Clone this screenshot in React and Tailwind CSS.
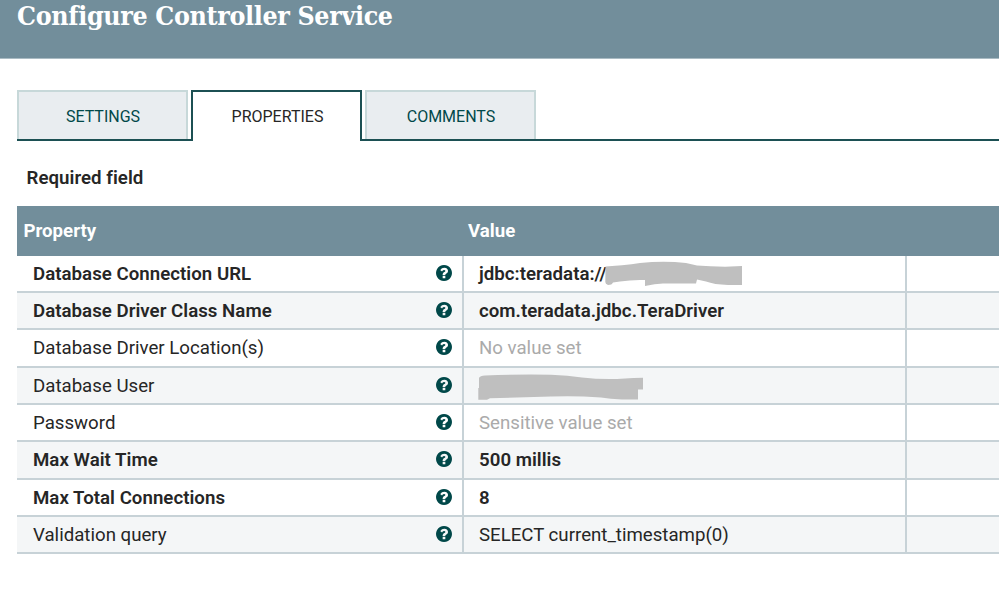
import React from "react";

const rows = [
  { name: "Database Connection URL", value: "jdbc:teradata://", required: true, mask: "url" },
  { name: "Database Driver Class Name", value: "com.teradata.jdbc.TeraDriver", required: true },
  { name: "Database Driver Location(s)", value: "No value set", unset: true },
  { name: "Database User", value: "", mask: "user" },
  { name: "Password", value: "Sensitive value set", unset: true },
  { name: "Max Wait Time", value: "500 millis", required: true },
  { name: "Max Total Connections", value: "8", required: true },
  { name: "Validation query", value: "SELECT current_timestamp(0)" },
];

function HelpIcon() {
  return (
    <svg viewBox="128 128 1536 1536" className="mt-[9px] size-4 shrink-0 fill-[#004849]">
      <path d="M1024 1376v-192q0-14-9-23t-23-9h-192q-14 0-23 9t-9 23v192q0 14 9 23t23 9h192q14 0 23-9t9-23zm256-672q0-88-55.5-163t-138.5-116-170-41q-243 0-371 213-15 24 8 42l132 100q7 6 19 6 16 0 25-12 53-68 86-92 34-24 86-24 48 0 85.5 26t37.5 59q0 38-20 61t-68 45q-63 28-115.5 86.500t-52.5 125.500v36q0 14 9 23t23 9h192q14 0 23-9t9-23q0-19 21.500-49.500t54.500-49.500q32-18 49-28.500t46-35 44.500-48 28-60.500 12.500-81zm384 192q0 209-103 385.500t-279.500 279.500-385.500 103-385.500-103-279.500-279.500-103-385.500 103-385.500 279.500-279.500 385.500-103 385.500 103 279.500 279.500 103 385.500z" />
    </svg>
  );
}

function Mask({ kind }) {
  if (kind === "url") {
    return (
      <svg viewBox="605 261 138 26" className="-ml-[1.500px] mt-[5px] h-[26px] w-[138px] shrink-0 fill-[#bfbfbf]">
        <path d="M605.500 266.500L622 265.300Q632 264.500 640 263Q664 260.500 686 263L697 265.500Q710 266.500 725 266.700L742 266V285H728Q714 284.500 706 281.500L697 279.500L696 283.500H663Q655 283.500 645 286V280Q632 279.500 620 281.500L613 282.500Q612 285 608 285Q605.300 284 605.300 282Z" />
      </svg>
    );
  }
  return (
    <svg viewBox="478 373 166 27" className="-ml-px mt-[6px] h-[27px] w-[166px] shrink-0 fill-[#bfbfbf]">
      <path d="M479 377Q480 374.500 485 374.500Q520 373 551 373.700Q568 374.500 582 376.500Q604 379 625 377.500Q633 377 643 376.700V388.500H638V398.500H622Q610 398 601 396.500Q575 394.500 551 395.500L490 397.200L487 398.700H478.300V387H479Z" />
    </svg>
  );
}

function Tab({ label, active }) {
  return (
    <div
      className={
        active
          ? "flex h-[51px] w-[171px] items-center justify-center border-x-2 border-t-2 border-[#1c5053] bg-white pl-[2px] text-[#262626]"
          : "flex h-[49px] w-[171px] items-center justify-center border-x-2 border-t-2 border-[#c7d8d9] bg-[#e9edf0] pt-[2px] pl-px text-[#004849]"
      }
    >
      <span>{label}</span>
    </div>
  );
}

export default function App() {
  return (
    <div className="h-[594px] w-[999px] overflow-hidden bg-white font-['Roboto',sans-serif] text-[18.670px] text-[#262626]">
      <header className="h-[58px] bg-[#728e9b] pl-[17px]">
        <h1 className="whitespace-nowrap font-['Roboto_Slab','DejaVu_Serif_Condensed','DejaVu_Serif',serif] text-[26.500px] leading-[32px] font-bold tracking-[-0.330px] text-white">
          <span>Configure Controller Service</span>
        </h1>
      </header>
      <div className="h-px bg-[#aabbc3]" />

      <nav className="mt-[31px] ml-[17px] flex h-[51px] items-start gap-[3px] bg-[linear-gradient(#1c5053,#1c5053)] bg-[length:100%_2px] bg-[position:0_49px] bg-no-repeat text-[16px]">
        <Tab label="SETTINGS" />
        <Tab label="PROPERTIES" active />
        <Tab label="COMMENTS" />
      </nav>

      <div className="mt-[23px] pl-[26.500px] leading-[28px] font-semibold tracking-[0.040px]">
        <span>Required field</span>
      </div>

      <section className="mt-[14px] ml-[17px]">
        <div className="flex h-[49.600px] items-center bg-[#728e9b] font-bold text-white">
          <div className="w-[451px] pl-[6.500px]"><span>Property</span></div>
          <div><span>Value</span></div>
        </div>
        {rows.map((r, i) => (
          <div
            key={r.name}
            className={`flex h-[37.330px] border-b-2 border-[#c7d2d7] leading-[37.500px] whitespace-nowrap ${i % 2 ? "bg-[#f4f6f7]" : "bg-white"} ${r.required ? "font-semibold tracking-[0.030px]" : ""}`}
          >
            <div className="flex w-[447px] justify-between border-r-2 border-[#c7d2d7] pr-[10.500px] pl-4">
              <span>{r.name}</span>
              <HelpIcon />
            </div>
            <div className={`flex w-[443px] border-r-2 border-[#c7d2d7] pl-[15px] ${r.unset ? "text-[#aaaaaa]" : ""}`}>
              {r.value && <span>{r.value}</span>}
              {r.mask && <Mask kind={r.mask} />}
            </div>
          </div>
        ))}
      </section>
    </div>
  );
}
